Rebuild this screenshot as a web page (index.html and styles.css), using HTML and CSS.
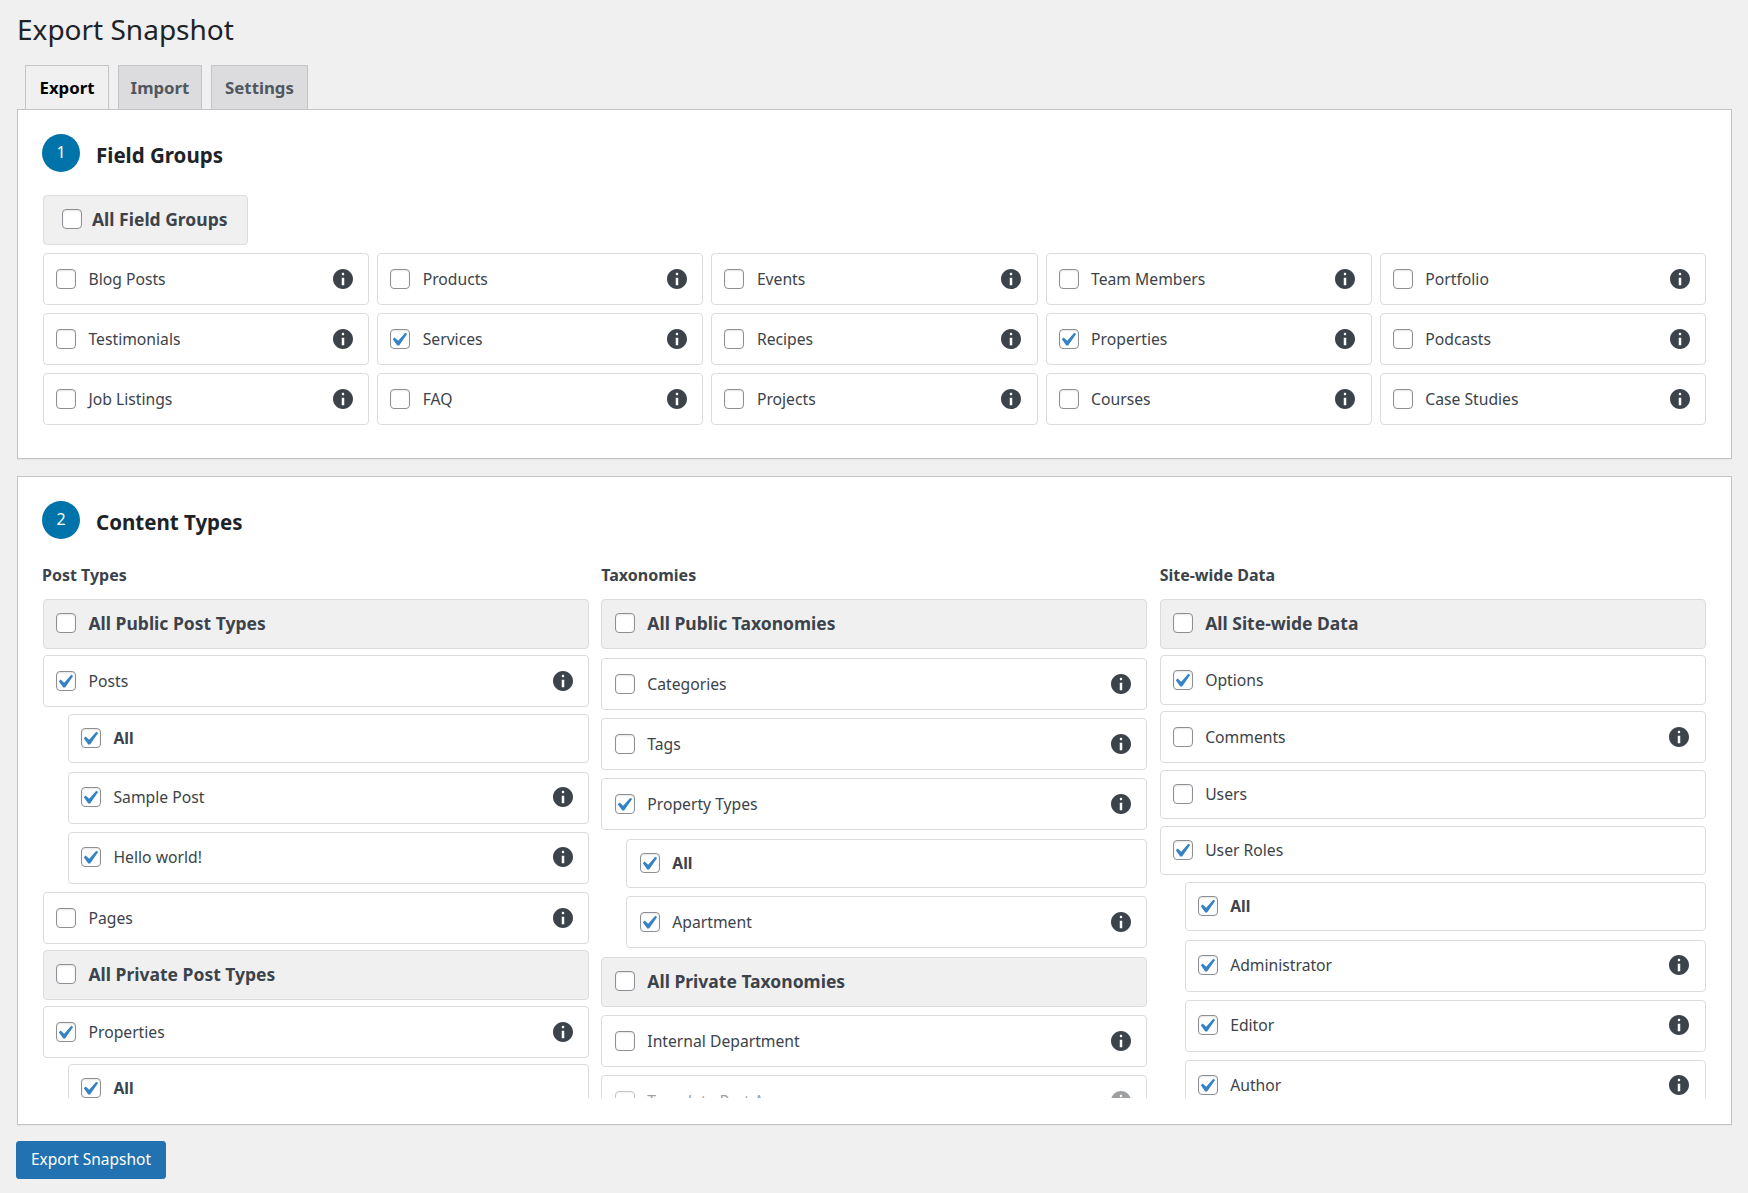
FILE: index.html
```html
<!doctype html>
<html lang="en">
<head>
<meta charset="utf-8">
<title>Export Snapshot</title>
<link rel="stylesheet" href="styles.css">
</head>
<body>
<svg class="sprite" aria-hidden="true">
  <symbol id="check" viewBox="3.75 2.25 14.5 14.5"><path d="M14.83 4.89l1.34.94-5.81 8.38H9.02L5.78 9.67l1.34-1.25 2.57 2.4z"/></symbol>
  <symbol id="info" viewBox="2 2 16 16"><path d="M10 2c4.42 0 8 3.58 8 8s-3.58 8-8 8-8-3.58-8-8 3.58-8 8-8zm1 4c0-.55-.45-1-1-1s-1 .45-1 1 .45 1 1 1 1-.45 1-1zm0 9V9H9v6h2z"/></symbol>
</svg>
<main class="wrap">
  <h1 class="title">Export Snapshot</h1>
  <nav class="tabs">
    <a class="tab active">Export</a>
    <a class="tab">Import</a>
    <a class="tab tab-wide">Settings</a>
  </nav>

  <section class="panel panel-groups">
    <header class="head"><span class="step">1</span><h2>Field Groups</h2></header>
    <label class="all-box"><span class="cb"></span>All Field Groups</label>
    <div class="fields">
      <label class="row"><span class="cb"></span><span class="txt">Blog Posts</span><svg class="ic"><use href="#info"/></svg></label>
      <label class="row"><span class="cb"></span><span class="txt">Products</span><svg class="ic"><use href="#info"/></svg></label>
      <label class="row"><span class="cb"></span><span class="txt">Events</span><svg class="ic"><use href="#info"/></svg></label>
      <label class="row"><span class="cb"></span><span class="txt">Team Members</span><svg class="ic"><use href="#info"/></svg></label>
      <label class="row"><span class="cb"></span><span class="txt">Portfolio</span><svg class="ic"><use href="#info"/></svg></label>
      <label class="row"><span class="cb"></span><span class="txt">Testimonials</span><svg class="ic"><use href="#info"/></svg></label>
      <label class="row"><span class="cb"><svg><use href="#check"/></svg></span><span class="txt">Services</span><svg class="ic"><use href="#info"/></svg></label>
      <label class="row"><span class="cb"></span><span class="txt">Recipes</span><svg class="ic"><use href="#info"/></svg></label>
      <label class="row"><span class="cb"><svg><use href="#check"/></svg></span><span class="txt">Properties</span><svg class="ic"><use href="#info"/></svg></label>
      <label class="row"><span class="cb"></span><span class="txt">Podcasts</span><svg class="ic"><use href="#info"/></svg></label>
      <label class="row"><span class="cb"></span><span class="txt">Job Listings</span><svg class="ic"><use href="#info"/></svg></label>
      <label class="row"><span class="cb"></span><span class="txt">FAQ</span><svg class="ic"><use href="#info"/></svg></label>
      <label class="row"><span class="cb"></span><span class="txt">Projects</span><svg class="ic"><use href="#info"/></svg></label>
      <label class="row"><span class="cb"></span><span class="txt">Courses</span><svg class="ic"><use href="#info"/></svg></label>
      <label class="row"><span class="cb"></span><span class="txt">Case Studies</span><svg class="ic"><use href="#info"/></svg></label>
    </div>
  </section>

  <section class="panel panel-types">
    <header class="head"><span class="step step-narrow">2</span><h2>Content Types</h2></header>
    <div class="cols">
      <div class="col col-posts">
        <h3>Post Types</h3>
        <label class="row group"><span class="cb"></span><span class="txt">All Public Post Types</span></label>
        <label class="row g6"><span class="cb"><svg><use href="#check"/></svg></span><span class="txt">Posts</span><svg class="ic"><use href="#info"/></svg></label>
        <label class="row sub plain g7"><span class="cb"><svg><use href="#check"/></svg></span><span class="txt strong">All</span></label>
        <label class="row sub g9"><span class="cb"><svg><use href="#check"/></svg></span><span class="txt">Sample Post</span><svg class="ic"><use href="#info"/></svg></label>
        <label class="row sub g8"><span class="cb"><svg><use href="#check"/></svg></span><span class="txt">Hello world!</span><svg class="ic"><use href="#info"/></svg></label>
        <label class="row g8"><span class="cb"></span><span class="txt">Pages</span><svg class="ic"><use href="#info"/></svg></label>
        <label class="row group g6"><span class="cb"></span><span class="txt">All Private Post Types</span></label>
        <label class="row g6"><span class="cb"><svg><use href="#check"/></svg></span><span class="txt">Properties</span><svg class="ic"><use href="#info"/></svg></label>
        <label class="row sub plain g6"><span class="cb"><svg><use href="#check"/></svg></span><span class="txt strong">All</span></label>
      </div>
      <div class="col col-tax">
        <h3>Taxonomies</h3>
        <label class="row group"><span class="cb"></span><span class="txt">All Public Taxonomies</span></label>
        <label class="row g9"><span class="cb"></span><span class="txt">Categories</span><svg class="ic"><use href="#info"/></svg></label>
        <label class="row g8"><span class="cb"></span><span class="txt">Tags</span><svg class="ic"><use href="#info"/></svg></label>
        <label class="row g8"><span class="cb"><svg><use href="#check"/></svg></span><span class="txt">Property Types</span><svg class="ic"><use href="#info"/></svg></label>
        <label class="row sub plain g9"><span class="cb"><svg><use href="#check"/></svg></span><span class="txt strong">All</span></label>
        <label class="row sub g8"><span class="cb"><svg><use href="#check"/></svg></span><span class="txt">Apartment</span><svg class="ic"><use href="#info"/></svg></label>
        <label class="row group g9"><span class="cb"></span><span class="txt">All Private Taxonomies</span></label>
        <label class="row g8"><span class="cb"></span><span class="txt">Internal Department</span><svg class="ic"><use href="#info"/></svg></label>
        <label class="row disabled g8"><span class="cb"></span><span class="txt">Template Part Areas</span><svg class="ic"><use href="#info"/></svg></label>
      </div>
      <div class="col">
        <h3>Site-wide Data</h3>
        <label class="row group"><span class="cb"></span><span class="txt">All Site-wide Data</span></label>
        <label class="row plain tall g6"><span class="cb"><svg><use href="#check"/></svg></span><span class="txt">Options</span></label>
        <label class="row g6"><span class="cb"></span><span class="txt">Comments</span><svg class="ic"><use href="#info"/></svg></label>
        <label class="row plain g7"><span class="cb"></span><span class="txt">Users</span></label>
        <label class="row plain g7"><span class="cb"><svg><use href="#check"/></svg></span><span class="txt">User Roles</span></label>
        <label class="row sub plain g7"><span class="cb"><svg><use href="#check"/></svg></span><span class="txt strong">All</span></label>
        <label class="row sub g9"><span class="cb"><svg><use href="#check"/></svg></span><span class="txt">Administrator</span><svg class="ic"><use href="#info"/></svg></label>
        <label class="row sub g8"><span class="cb"><svg><use href="#check"/></svg></span><span class="txt">Editor</span><svg class="ic"><use href="#info"/></svg></label>
        <label class="row sub g8"><span class="cb"><svg><use href="#check"/></svg></span><span class="txt">Author</span><svg class="ic"><use href="#info"/></svg></label>
      </div>
    </div>
  </section>

  <button class="export" type="button">Export Snapshot</button>
</main>
</body>
</html>
```
FILE: styles.css
```css
html, body { margin: 0; padding: 0; background: #f0f0f1; }
body { font-family: "Noto Sans", "Open Sans", sans-serif; color: #3c434a; height: 1193px; overflow: hidden; }
.sprite { display: none; }
.wrap { width: 1715px; margin-left: 17px; }

.title { margin: 0; padding-top: 12px; height: 52px; box-sizing: border-box; font-size: 28px; line-height: 34px; font-weight: 400; color: #1d2327; }

.tabs { display: flex; gap: 9px; padding-left: 8px; height: 44px; margin-top: 13px; }
.tab { box-sizing: border-box; width: 84px; height: 44px; padding-bottom: 1px; display: flex; align-items: center; justify-content: center; border: 1px solid #c3c4c7; border-bottom: 0; background: #dcdcde; color: #50575e; font-size: 16.8px; font-weight: 700; }
.tab-wide { width: 97px; }
.tab.active { background: #f0f0f1; color: #000; }

.panel { background: #fff; border: 1px solid #c3c4c7; box-shadow: 0 1px 1px rgba(0,0,0,.04); box-sizing: border-box; padding: 0 25px; }
.panel-groups { height: 350px; padding-top: 24px; }
.panel-types { height: 649px; margin-top: 17px; padding-top: 24px; }

.head { display: flex; align-items: center; height: 38px; }
.step { width: 38px; height: 38px; margin-left: -1px; margin-right: 16px; border-radius: 50%; background: #0073aa; color: #fff; font-size: 16px; line-height: 37px; text-align: center; }
.head h2 { margin: 0; font-size: 20.5px; line-height: 38px; font-weight: 700; color: #1d2327; padding-top: 4px; }

.all-box { display: inline-flex; align-items: center; box-sizing: border-box; width: 205px; height: 50px; margin-top: 23px; padding: 0 0 2px 18px; gap: 10px; background: #f0f0f1; border: 1px solid #dcdcde; border-radius: 4px; font-size: 17.5px; font-weight: 700; vertical-align: top; }

.fields { display: grid; grid-template-columns: repeat(5, 1fr); gap: 8px; margin-top: 8px; }

.row { display: flex; align-items: center; box-sizing: border-box; height: 52px; padding: 0 15.5px 0 12px; gap: 12.5px; background: #fff; border: 1px solid #dcdcde; border-radius: 4px; font-size: 15.7px; }
.txt { flex: 1; white-space: nowrap; }
.strong { font-weight: 700; }
.ic { width: 20px; height: 20px; flex: none; fill: #3c434a; margin-top: -1px; }

.cb { flex: none; box-sizing: border-box; width: 20px; height: 20px; background: #fff; border: 1px solid #8c8f94; border-radius: 4px; box-shadow: inset 0 1px 2px rgba(0,0,0,.1); position: relative; }
.cb svg { display: block; position: absolute; left: -1px; top: -1px; width: 20px; height: 20px; fill: #3582c4; }

.cols { display: grid; grid-template-columns: repeat(3, 1fr); column-gap: 12px; height: 534px; margin-top: 25px; overflow: hidden; }
.col { min-width: 0; }
.col h3 { margin: 1px 0 14px; font-size: 16px; line-height: 20px; font-weight: 700; }
.col-posts h3 { margin-left: -1px; }

.group { height: 50px; padding-bottom: 2px; background: #f0f0f1; font-size: 17.5px; font-weight: 700; }
.plain { height: 49px; padding-bottom: 2px; }
.plain.tall { height: 50px; padding-bottom: 0; }
.sub { margin-left: 25px; padding-bottom: 2px; }
.disabled .cb, .disabled .txt, .disabled .ic { opacity: .5; }

.col-tax { margin-right: .5px; }
.col-tax .row { padding-left: 13px; gap: 12px; }
.col-tax .sub:not(.plain) { padding-bottom: 0; }

.g6 { margin-top: 6px; }
.g7 { margin-top: 7px; }
.g8 { margin-top: 8px; }
.g9 { margin-top: 9px; }

.export { display: block; box-sizing: border-box; width: 150px; height: 38px; margin: 16px 0 0 -1px; padding: 0 0 3px; background: #2271b1; border: 1px solid #2271b1; border-radius: 3px; color: #fff; font-family: inherit; font-size: 15.5px; }
```
